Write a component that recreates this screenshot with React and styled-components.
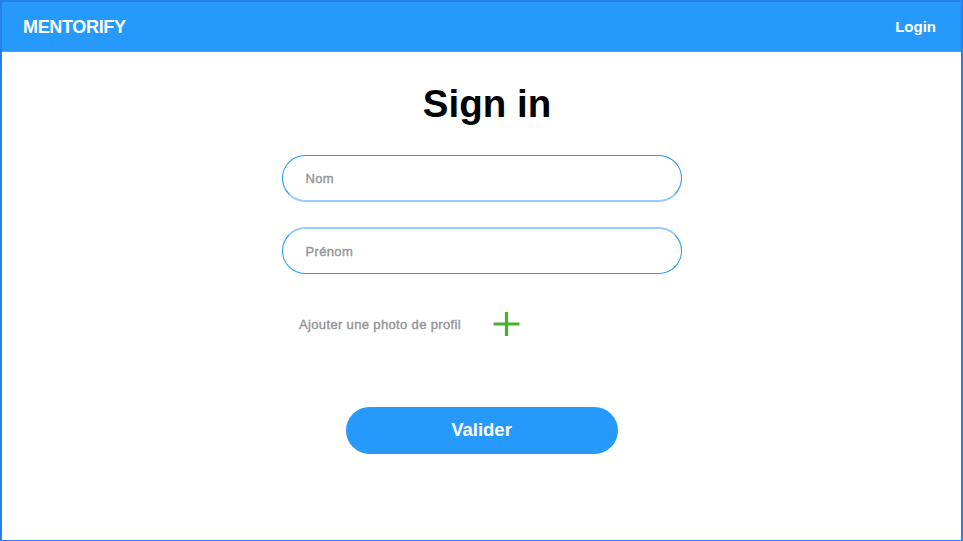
import React from "react";
import styled, { createGlobalStyle } from "styled-components";

const GlobalStyle = createGlobalStyle`
  * { box-sizing: border-box; }
  body { margin: 0; font-family: "Liberation Sans", Arial, sans-serif; }
`;

const Page = styled.div`
  width: 963px;
  height: 541px;
  overflow: hidden;
  background: #fff;
  border: 2px solid #2680eb;
  border-bottom-width: 1px;
`;

const TopBar = styled.header`
  display: flex;
  justify-content: space-between;
  align-items: center;
  height: 50px;
  padding: 0 25px 0 21px;
  background: #2699fb;
  color: #fff;
  border-bottom: 1px solid #6f9dc6;
`;

const Brand = styled.span`
  font-size: 18px;
  font-weight: 700;
  letter-spacing: -0.33px;
  padding-top: 1px;
`;

const LoginLink = styled.a`
  font-size: 15px;
  font-weight: 700;
`;

const Form = styled.form`
  display: flex;
  flex-direction: column;
  align-items: center;
`;

const Title = styled.h1`
  margin: 29px 0 0 11px;
  font-size: 38.5px;
  line-height: 46px;
  font-weight: 700;
`;

const Field = styled.input`
  width: 400px;
  height: 46px;
  margin-top: ${({ $gap }) => $gap}px;
  padding: 0 23px;
  border: 1px solid #2699fb;
  border-${({ $softEdge }) => $softEdge}-color: #93ccfd;
  border-radius: 24px;
  box-shadow: 0 ${({ $softEdge }) => ($softEdge === "bottom" ? 1 : -1)}px 0 #93ccfd;
  outline: none;
  font: 400 13px "Liberation Sans", Arial, sans-serif;
  letter-spacing: 0.35px;
  &::placeholder { color: #959595; opacity: 1; -webkit-text-stroke: 0.4px #959595; }
`;

const PhotoRow = styled.div`
  display: flex;
  align-items: center;
  width: 365px;
  height: 26px;
  margin-top: 37px;
`;

const PhotoLabel = styled.span`
  width: 194px;
  color: #959595;
  font-size: 13px;
  letter-spacing: 0.35px;
  -webkit-text-stroke: 0.4px #959595;
`;

const Submit = styled.button`
  width: 272px;
  height: 47px;
  margin-top: 70px;
  padding: 0 0 1px;
  border: 0;
  border-radius: 24px;
  background: #2699fb;
  color: #fff;
  font: 700 18.5px "Liberation Sans", Arial, sans-serif;
`;

const PlusIcon = () => (
  <svg width="27" height="24" viewBox="0 0 27 24">
    <path d="M0.5 12H26.5M13.5 0V24" stroke="#43b42a" strokeWidth="3.2" />
  </svg>
);

export default function App() {
  return (
    <>
      <GlobalStyle />
      <Page>
        <TopBar>
          <Brand>MENTORIFY</Brand>
          <LoginLink>Login</LoginLink>
        </TopBar>
        <Form>
          <Title>Sign in</Title>
          <Field $gap={28} $softEdge="bottom" placeholder="Nom" />
          <Field $gap={27} $softEdge="top" placeholder="Prénom" />
          <PhotoRow>
            <PhotoLabel>Ajouter une photo de profil</PhotoLabel>
            <PlusIcon />
          </PhotoRow>
          <Submit type="button">Valider</Submit>
        </Form>
      </Page>
    </>
  );
}
